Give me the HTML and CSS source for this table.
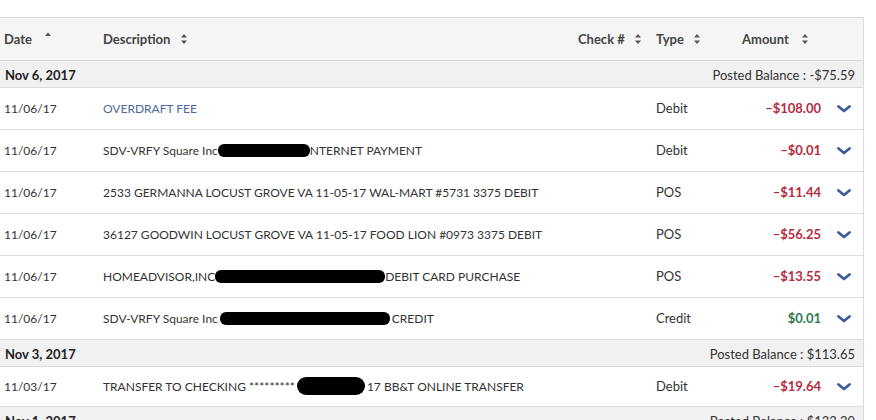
FILE: index.html
```html
<!DOCTYPE html>
<html>
<head>
<meta charset="utf-8">
<link rel="stylesheet" href="styles.css">
</head>
<body>
<div class="table">
  <div class="row head">
    <div class="c date">Date <svg class="sort" width="8" height="10" viewBox="0 0 8 10"><path d="M1 4 L4 0.5 L7 4 Z" fill="#555"/></svg></div>
    <div class="c desc">Description <svg class="sort" width="8" height="12" viewBox="0 0 8 12"><path d="M1 4.5 L4 1 L7 4.5 Z M1 7.5 L4 11 L7 7.5 Z" fill="#555"/></svg></div>
    <div class="c check">Check # <svg class="sort" width="8" height="12" viewBox="0 0 8 12"><path d="M1 4.5 L4 1 L7 4.5 Z M1 7.5 L4 11 L7 7.5 Z" fill="#555"/></svg></div>
    <div class="c type">Type <svg class="sort" width="8" height="12" viewBox="0 0 8 12"><path d="M1 4.5 L4 1 L7 4.5 Z M1 7.5 L4 11 L7 7.5 Z" fill="#555"/></svg></div>
    <div class="c amthead">Amount <svg class="sort" width="8" height="12" viewBox="0 0 8 12"><path d="M1 4.5 L4 1 L7 4.5 Z M1 7.5 L4 11 L7 7.5 Z" fill="#555"/></svg></div>
    <div class="c"></div>
  </div>

  <div class="group"><span class="gdate">Nov 6, 2017</span><span class="bal">Posted Balance : -$75.59</span></div>

  <div class="row">
    <div class="c date">11/06/17</div>
    <div class="c desc link">OVERDRAFT FEE</div>
    <div class="c check"></div>
    <div class="c type">Debit</div>
    <div class="c amt neg">–$108.00</div>
    <div class="c chev"><svg width="14" height="8" viewBox="0 0 14 8"><path d="M1.5 1.5 L7 6 L12.5 1.5" fill="none" stroke="#3f5c9a" stroke-width="2.8" stroke-linecap="round" stroke-linejoin="round"/></svg></div>
  </div>
  <div class="row">
    <div class="c date">11/06/17</div>
    <div class="c desc">SDV-VRFY Square Inc<span class="blot b1"></span>NTERNET PAYMENT</div>
    <div class="c check"></div>
    <div class="c type">Debit</div>
    <div class="c amt neg">–$0.01</div>
    <div class="c chev"><svg width="14" height="8" viewBox="0 0 14 8"><path d="M1.5 1.5 L7 6 L12.5 1.5" fill="none" stroke="#3f5c9a" stroke-width="2.8" stroke-linecap="round" stroke-linejoin="round"/></svg></div>
  </div>
  <div class="row">
    <div class="c date">11/06/17</div>
    <div class="c desc">2533 GERMANNA LOCUST GROVE VA 11-05-17 WAL-MART #5731 3375 DEBIT</div>
    <div class="c check"></div>
    <div class="c type">POS</div>
    <div class="c amt neg">–$11.44</div>
    <div class="c chev"><svg width="14" height="8" viewBox="0 0 14 8"><path d="M1.5 1.5 L7 6 L12.5 1.5" fill="none" stroke="#3f5c9a" stroke-width="2.8" stroke-linecap="round" stroke-linejoin="round"/></svg></div>
  </div>
  <div class="row">
    <div class="c date">11/06/17</div>
    <div class="c desc">36127 GOODWIN LOCUST GROVE VA 11-05-17 FOOD LION #0973 3375 DEBIT</div>
    <div class="c check"></div>
    <div class="c type">POS</div>
    <div class="c amt neg">–$56.25</div>
    <div class="c chev"><svg width="14" height="8" viewBox="0 0 14 8"><path d="M1.5 1.5 L7 6 L12.5 1.5" fill="none" stroke="#3f5c9a" stroke-width="2.8" stroke-linecap="round" stroke-linejoin="round"/></svg></div>
  </div>
  <div class="row">
    <div class="c date">11/06/17</div>
    <div class="c desc">HOMEADVISOR,INC<span class="blot b2"></span>DEBIT CARD PURCHASE</div>
    <div class="c check"></div>
    <div class="c type">POS</div>
    <div class="c amt neg">–$13.55</div>
    <div class="c chev"><svg width="14" height="8" viewBox="0 0 14 8"><path d="M1.5 1.5 L7 6 L12.5 1.5" fill="none" stroke="#3f5c9a" stroke-width="2.8" stroke-linecap="round" stroke-linejoin="round"/></svg></div>
  </div>
  <div class="row">
    <div class="c date">11/06/17</div>
    <div class="c desc">SDV-VRFY Square Inc<span class="blot b3"></span>CREDIT</div>
    <div class="c check"></div>
    <div class="c type">Credit</div>
    <div class="c amt pos">$0.01</div>
    <div class="c chev"><svg width="14" height="8" viewBox="0 0 14 8"><path d="M1.5 1.5 L7 6 L12.5 1.5" fill="none" stroke="#3f5c9a" stroke-width="2.8" stroke-linecap="round" stroke-linejoin="round"/></svg></div>
  </div>

  <div class="group"><span class="gdate">Nov 3, 2017</span><span class="bal">Posted Balance : $113.65</span></div>

  <div class="row short">
    <div class="c date">11/03/17</div>
    <div class="c desc">TRANSFER TO CHECKING *********<span class="blot b4"></span>17 BB&amp;T ONLINE TRANSFER</div>
    <div class="c check"></div>
    <div class="c type">Debit</div>
    <div class="c amt neg">–$19.64</div>
    <div class="c chev"><svg width="14" height="8" viewBox="0 0 14 8"><path d="M1.5 1.5 L7 6 L12.5 1.5" fill="none" stroke="#3f5c9a" stroke-width="2.8" stroke-linecap="round" stroke-linejoin="round"/></svg></div>
  </div>

  <div class="group"><span class="gdate">Nov 1, 2017</span><span class="bal">Posted Balance : $133.29</span></div>
</div>
</body>
</html>
```

FILE: styles.css
```css
html, body {
  margin: 0;
  padding: 0;
  background: #fff;
}
body {
  font-family: Lato, "Open Sans", sans-serif;
  font-size: 13px;
  color: #333;
  padding-top: 17px;
}
.table {
  width: 864px;
  border-right: 1px solid #dcdcdc;
  border-top: 1px solid #dcdcdc;
  box-sizing: border-box;
}
.row {
  display: grid;
  grid-template-columns: 103px 467px 80px 86px 88px 39px;
  height: 42px;
  align-items: center;
  border-bottom: 1px solid #dedede;
  box-sizing: border-box;
}
.row.short { height: 40px; }
.row.head {
  background: #f5f5f5;
  height: 43px;
  font-weight: 700;
  color: #444;
  border-bottom: 1px solid #d6d6d6;
}
.c {
  white-space: nowrap;
  display: flex;
  align-items: center;
}
.row:not(.head) .date,
.row:not(.head) .desc {
  font-size: 12px;
  padding-bottom: 1px;
}
.date { padding-left: 4px; }
.check { padding-left: 8px; }
.type { padding-left: 6px; padding-bottom: 1px; }
.amthead { padding-left: 6px; }
.sort { margin-left: 10px; }
.head .date .sort { margin-left: 12px; margin-top: -4px; }
.head .check .sort { margin-left: 9px; }
.head .type .sort { margin-left: 9px; }
.head .amthead .sort { margin-left: 12px; }
.link { color: #4a6aa0; }
.amt {
  justify-content: flex-end;
  padding-right: 3px;
  padding-bottom: 1px;
  font-weight: 700;
}
.neg { color: #b52d3f; }
.pos { color: #2f7a4c; }
.chev {
  padding-left: 13px;
}
.group {
  display: flex;
  justify-content: space-between;
  align-items: center;
  height: 27px;
  background: #f1f1f1;
  border-bottom: 1px solid #dcdcdc;
  box-sizing: border-box;
  padding: 1px 8px 0 5px;
}
.gdate { font-weight: 700; color: #222; }
.bal { color: #333; }
.blot {
  display: inline-block;
  background: #000;
  height: 13px;
  border-radius: 6px;
}
.b1 { width: 92px; }
.b2 { width: 170px; }
.b3 { width: 170px; margin-left: 2px; margin-right: 2px; }
.b4 { width: 68px; height: 18px; border-radius: 9px; margin-left: 2px; margin-right: 2px; }
```
